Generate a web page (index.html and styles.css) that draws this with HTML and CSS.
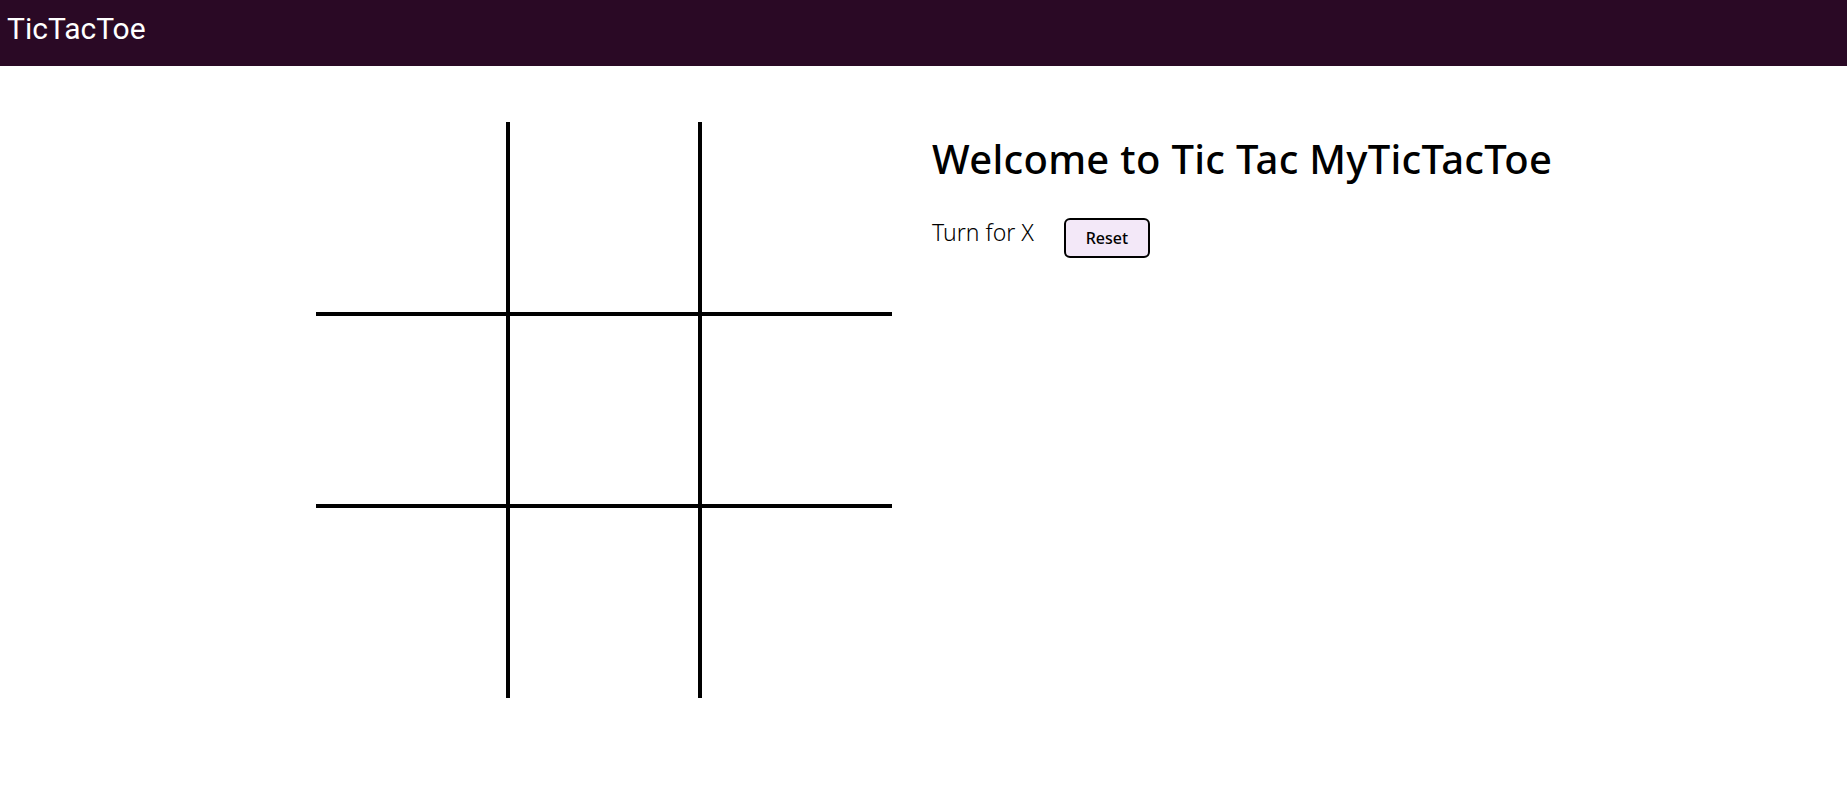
FILE: index.html
```html
<!DOCTYPE html>
<html lang="en">
<head>
<meta charset="utf-8">
<title>TicTacToe</title>
<link rel="stylesheet" href="styles.css">
</head>
<body>
<header class="appbar">
  <span class="brand">TicTacToe</span>
</header>
<main class="main">
  <div class="board">
    <div class="cell c-r c-b"></div>
    <div class="cell c-l c-r c-b"></div>
    <div class="cell c-l c-b"></div>
    <div class="cell c-t c-r c-b"></div>
    <div class="cell c-t c-l c-r c-b"></div>
    <div class="cell c-t c-l c-b"></div>
    <div class="cell c-t c-r"></div>
    <div class="cell c-t c-l c-r"></div>
    <div class="cell c-t c-l"></div>
  </div>
  <section class="info">
    <h1 class="title">Welcome to Tic Tac MyTicTacToe</h1>
    <div class="status">
      <span class="turn">Turn for X</span>
      <button class="reset" type="button">Reset</button>
    </div>
  </section>
</main>
</body>
</html>
```
FILE: styles.css
```css
html, body {
  margin: 0;
  padding: 0;
  background: #ffffff;
}

body {
  font-family: "Noto Sans", "Open Sans", sans-serif;
  color: #000;
}

.appbar {
  height: 66px;
  background: #2a0925;
  display: flex;
  align-items: flex-start;
  padding: 0 7px;
}

.brand {
  font-family: Roboto, "Liberation Sans", sans-serif;
  font-size: 30px;
  line-height: 30px;
  color: #ffffff;
  margin-top: 14px;
}

.main {
  display: flex;
  align-items: flex-start;
  padding: 56px 0 0 316px;
  gap: 40px;
}

.board {
  display: grid;
  grid-template-columns: repeat(3, 192px);
  grid-template-rows: repeat(3, 192px);
  flex: none;
}

.cell {
  box-sizing: border-box;
  width: 192px;
  height: 192px;
}

.c-t { border-top: 2px solid #000; }
.c-b { border-bottom: 2px solid #000; }
.c-l { border-left: 2px solid #000; }
.c-r { border-right: 2px solid #000; }

.info {
  display: flex;
  flex-direction: column;
}

.title {
  margin: 13px 0 0;
  font-size: 40px;
  font-weight: 500;
  line-height: 48px;
  letter-spacing: 0.3px;
}

.status {
  display: flex;
  align-items: flex-start;
  gap: 30px;
  margin-top: 35px;
}

.turn {
  font-size: 23px;
  font-weight: 300;
  line-height: 28px;
}

.reset {
  box-sizing: border-box;
  width: 86px;
  height: 40px;
  border: 2px solid #000;
  border-radius: 6px;
  background: #f3e8f8;
  font-family: "Noto Sans", "Open Sans", sans-serif;
  font-size: 16px;
  font-weight: 500;
  color: #000;
  padding: 0;
}
```
